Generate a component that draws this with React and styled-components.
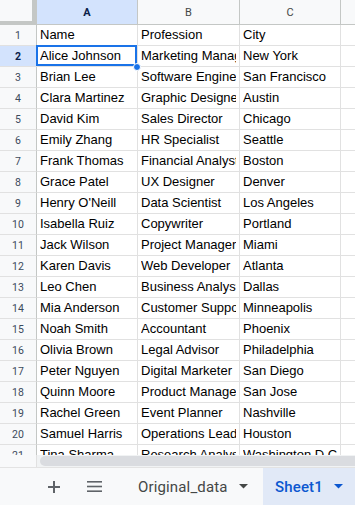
import React from "react";
import styled, { createGlobalStyle, css } from "styled-components";

const Global = createGlobalStyle`
  html, body { margin: 0; padding: 0; background: #fff; }
  body { font-family: "Liberation Sans", Arial, sans-serif; }
  * { box-sizing: border-box; }
`;

const rows = [
  ["Name", "Profession", "City"],
  ["Alice Johnson", "Marketing Manager", "New York"],
  ["Brian Lee", "Software Engineer", "San Francisco"],
  ["Clara Martinez", "Graphic Designer", "Austin"],
  ["David Kim", "Sales Director", "Chicago"],
  ["Emily Zhang", "HR Specialist", "Seattle"],
  ["Frank Thomas", "Financial Analyst", "Boston"],
  ["Grace Patel", "UX Designer", "Denver"],
  ["Henry O'Neill", "Data Scientist", "Los Angeles"],
  ["Isabella Ruiz", "Copywriter", "Portland"],
  ["Jack Wilson", "Project Manager", "Miami"],
  ["Karen Davis", "Web Developer", "Atlanta"],
  ["Leo Chen", "Business Analyst", "Dallas"],
  ["Mia Anderson", "Customer Support", "Minneapolis"],
  ["Noah Smith", "Accountant", "Phoenix"],
  ["Olivia Brown", "Legal Advisor", "Philadelphia"],
  ["Peter Nguyen", "Digital Marketer", "San Diego"],
  ["Quinn Moore", "Product Manager", "San Jose"],
  ["Rachel Green", "Event Planner", "Nashville"],
  ["Samuel Harris", "Operations Lead", "Houston"],
  ["Tina Sharma", "Research Analyst", "Washington D.C."],
];

const Page = styled.div`
  width: 355px;
  height: 505px;
  display: flex;
  flex-direction: column;
  overflow: hidden;
  background: #fff;
`;

const SheetArea = styled.div`
  flex: 1;
  overflow: hidden;
  min-height: 0;
`;

const Grid = styled.div`
  display: grid;
  grid-template-columns: 37px 101px 102px 101px 60px;
  grid-auto-rows: 21px;
  grid-template-rows: 25px;
  width: 401px;
`;

const Corner = styled.div`
  background: #f8f9fa;
  border-right: 5px solid #c4c7c5;
  border-bottom: 4px solid #c4c7c5;
`;

const ColHead = styled.div`
  display: flex;
  align-items: center;
  justify-content: center;
  font-family: Roboto, "Liberation Sans", sans-serif;
  font-size: 11px;
  color: #444746;
  background: ${(p) => (p.$active ? "#d3e3fd" : "#f8f9fa")};
  font-weight: ${(p) => (p.$active ? 700 : 400)};
  ${(p) => p.$active && css`color: #0b1f4b;`}
  border-right: 1px solid #c4c7c5;
  border-bottom: 1px solid #c4c7c5;
  padding-top: 1px;
`;

const RowHead = styled.div`
  display: flex;
  align-items: center;
  justify-content: center;
  font-family: Roboto, "Liberation Sans", sans-serif;
  font-size: 10.5px;
  color: ${(p) => (p.$active ? "#0b1f4b" : "#3c4a5c")};
  font-weight: ${(p) => (p.$active ? 700 : 400)};
  background: ${(p) => (p.$active ? "#d3e3fd" : "#f8f9fa")};
  border-right: 1px solid #c4c7c5;
  border-bottom: 1px solid #e1e1e1;
`;

const Cell = styled.div`
  position: relative;
  font-family: "Liberation Sans", Arial, sans-serif;
  font-size: 13px;
  color: #000;
  line-height: 20px;
  padding: 0 3px;
  white-space: nowrap;
  overflow: ${(p) => (p.$spill ? "visible" : "hidden")};
  border-right: 1px solid #e1e1e1;
  border-bottom: 1px solid #e1e1e1;
  ${(p) =>
    p.$selected &&
    css`
      overflow: visible;
      box-shadow: inset 0 0 0 2px #1a73e8;
      margin: -1px 0 0 -1px;
      padding-left: 4px;
      padding-top: 1px;
    `}
`;

const CellText = styled.span`
  display: block;
  overflow: hidden;
`;

const FillHandle = styled.span`
  position: absolute;
  right: -4px;
  bottom: -5px;
  width: 8px;
  height: 8px;
  border-radius: 50%;
  background: #1a73e8;
  border: 1px solid #fff;
  z-index: 2;
`;

const EmptyCell = styled.div`
  border-bottom: 1px solid #e1e1e1;
`;

const ScrollRow = styled.div`
  height: 12px;
  flex: none;
  display: flex;
  background: #fff;
`;

const ScrollGutter = styled.div`
  width: 37px;
  background: #f8f9fa;
  border-right: 1px solid #e1e1e1;
`;

const ScrollTrack = styled.div`
  flex: 1;
  padding: 1px 0 1px 3px;
  background: #f1f3f4;
`;

const ScrollThumb = styled.div`
  height: 100%;
  background: #dadce0;
  border-radius: 6px 0 0 6px;
`;

const BottomBar = styled.div`
  height: 38px;
  flex: none;
  display: flex;
  align-items: stretch;
  background: #f8f9fa;
  border-top: 1px solid #e3e3e3;
`;

const IconButton = styled.div`
  width: ${(p) => p.$w}px;
  display: flex;
  align-items: center;
  justify-content: center;
  color: #5f6368;
`;

const Tab = styled.div`
  display: flex;
  align-items: center;
  gap: 11px;
  font-family: Roboto, "Liberation Sans", sans-serif;
  font-size: 15px;
  letter-spacing: 0.15px;
  ${(p) =>
    p.$active
      ? css`
          flex: 1;
          padding: 0 0 0 12px;
          font-weight: 500;
          color: #0b57d0;
          background: #e1e9f7;
        `
      : css`
          width: 152px;
          padding: 0 0 0 27px;
          font-weight: 400;
          color: #444746;
        `}
`;

const Caret = ({ color }) => (
  <svg width="9" height="5" viewBox="0 0 9 5">
    <path d="M0 0h9L4.5 4.5z" fill={color} />
  </svg>
);

const cols = ["A", "B", "C"];

export default function App() {
  return (
    <Page>
      <Global />
      <SheetArea>
        <Grid>
          <Corner />
          {cols.map((c, i) => (
            <ColHead key={c} $active={i === 0}>
              {c}
            </ColHead>
          ))}
          <ColHead />
          {rows.map((r, ri) => (
            <React.Fragment key={ri}>
              <RowHead $active={ri === 1}>{ri + 1}</RowHead>
              {r.map((v, ci) => (
                <Cell key={ci} $selected={ri === 1 && ci === 0} $spill={ci === 2}>
                  <CellText>{v}</CellText>
                  {ri === 1 && ci === 0 && <FillHandle />}
                </Cell>
              ))}
              <EmptyCell />
            </React.Fragment>
          ))}
        </Grid>
      </SheetArea>
      <ScrollRow>
        <ScrollGutter />
        <ScrollTrack>
          <ScrollThumb />
        </ScrollTrack>
      </ScrollRow>
      <BottomBar>
        <IconButton $w={47} style={{ marginLeft: 30 }}>
          <svg width="12" height="12" viewBox="0 0 12 12">
            <path d="M5 0h2v5h5v2H7v5H5V7H0V5h5z" fill="#5f6368" />
          </svg>
        </IconButton>
        <IconButton $w={34}>
          <svg width="15" height="11" viewBox="0 0 15 11">
            <rect x="0" y="0" width="15" height="1.6" fill="#5f6368" />
            <rect x="0" y="4.7" width="15" height="1.6" fill="#5f6368" />
            <rect x="0" y="9.4" width="15" height="1.6" fill="#5f6368" />
          </svg>
        </IconButton>
        <Tab>
          Original_data
          <Caret color="#444746" />
        </Tab>
        <Tab $active>
          Sheet1
          <Caret color="#0b57d0" />
        </Tab>
      </BottomBar>
    </Page>
  );
}
